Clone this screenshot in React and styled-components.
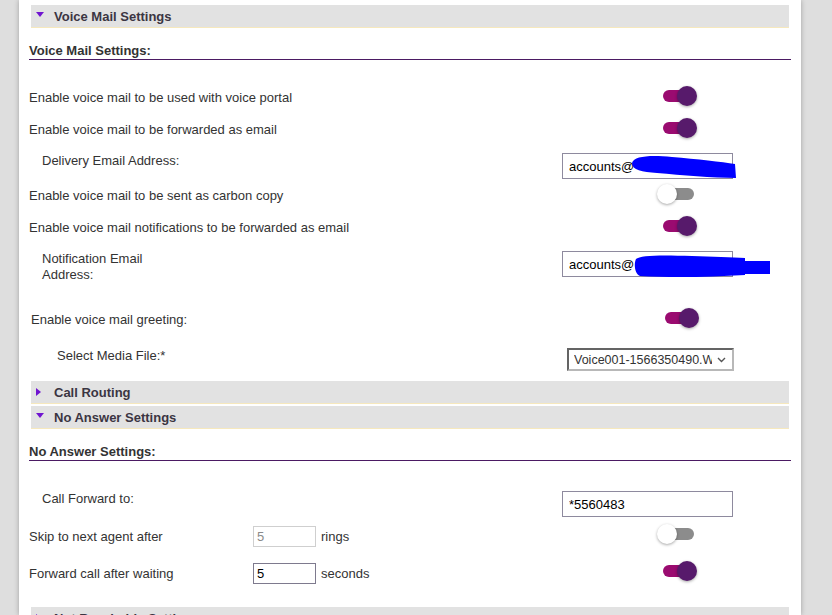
import React from 'react';
import styled, { createGlobalStyle } from 'styled-components';

const GlobalStyle = createGlobalStyle`
  html, body {
    margin: 0;
    padding: 0;
    background: #dedede;
    overflow: hidden;
  }
  body {
    font-family: "Liberation Sans", Arial, sans-serif;
    font-size: 13px;
    color: #333;
  }
`;

const Page = styled.div`
  display: flex;
  padding-left: 19px;
  height: 615px;
`;

const Panel = styled.div`
  width: 782px;
  background: #fff;
  box-shadow: 0 0 5px rgba(0, 0, 0, 0.28);
  padding: 5px 10px 0;
  box-sizing: border-box;
`;

const SectionHeader = styled.div`
  display: flex;
  align-items: center;
  height: 22px;
  margin: ${p => p.$mt || 0}px 2px ${p => p.$mb || 0}px;
  background: #e2e2e2;
  border-bottom: 1px solid #f6e8bd;
  font-weight: bold;
  font-size: 13px;
  color: #3b3542;
`;

const CaretBox = styled.span`
  width: 23px;
  display: flex;
  justify-content: ${p => (p.$open ? 'flex-start' : 'flex-start')};
  padding-left: 5px;
  box-sizing: border-box;
`;

const Caret = styled.span`
  width: 0;
  height: 0;
  ${p =>
    p.$open
      ? `
    border-left: 4.5px solid transparent;
    border-right: 4.5px solid transparent;
    border-top: 5px solid #7014d0;
    margin-bottom: 3px;
  `
      : `
    border-top: 4.5px solid transparent;
    border-bottom: 4.5px solid transparent;
    border-left: 5px solid #7014d0;
  `}
`;

const Heading = styled.div`
  margin: 15px 0 22px;
  font-weight: bold;
  font-size: 13px;
  line-height: 16px;
  color: #333;
  border-bottom: 1px solid #4b1a63;
`;

const Row = styled.div`
  display: grid;
  grid-template-columns: 533px 1fr;
  align-items: ${p => (p.$top !== undefined ? 'start' : 'center')};
  height: ${p => p.$h}px;
  padding-top: ${p => p.$top || 0}px;
  padding-left: ${p => p.$shift || 0}px;
  box-sizing: border-box;
`;

const Label = styled.div`
  padding-left: ${p => p.$indent || 0}px;
  line-height: 16px;
  width: ${p => (p.$w ? `${p.$w}px` : 'auto')};
  color: #333;
`;

const Control = styled.div`
  display: flex;
  align-items: center;
  padding-left: ${p => p.$offset || 0}px;
`;

const InlineGroup = styled.div`
  display: flex;
  align-items: center;
`;

const Switch = styled.span`
  position: relative;
  display: inline-block;
  width: 40px;
  height: 20px;
  margin-bottom: 5px;
`;

const Track = styled.span`
  position: absolute;
  left: 6px;
  top: 4px;
  width: 31px;
  height: 12px;
  border-radius: 6px;
  background: ${p => (p.$on ? '#9a0b70' : '#8c8c8c')};
`;

const Knob = styled.span`
  position: absolute;
  top: 0;
  left: ${p => (p.$on ? 20 : 0)}px;
  width: 20px;
  height: 20px;
  border-radius: 50%;
  background: ${p => (p.$on ? '#571a6b' : '#fff')};
  box-shadow: 0 1px 3px rgba(0, 0, 0, 0.35);
`;

const FieldWrap = styled.span`
  position: relative;
  display: inline-block;
`;

const TextInput = styled.input`
  width: 171px;
  height: 26px;
  box-sizing: border-box;
  border: 1px solid #8e8a9e;
  padding: 0 6px;
  font: 13px "Liberation Sans", Arial, sans-serif;
  color: #000;
  background: #fff;
  outline: none;
`;

const SmallInput = styled.input`
  width: 63px;
  height: 21px;
  box-sizing: border-box;
  border: 1px solid ${p => (p.disabled ? '#cfcfcf' : '#7e7a8e')};
  padding: 0 3px;
  font: 13px "Liberation Sans", Arial, sans-serif;
  color: ${p => (p.disabled ? '#8a8a8a' : '#000')};
  background: #fff;
`;

const Unit = styled.span`
  margin-left: 5px;
  color: #333;
`;

const Redaction = styled.svg`
  position: absolute;
  left: 0;
  top: 0;
  overflow: visible;
  pointer-events: none;
`;

const Select = styled.select`
  appearance: none;
  width: 167px;
  height: 23px;
  box-sizing: border-box;
  border: 2px inset #b8b8b8;
  padding: 0 20px 0 5px;
  font: 12.5px "Liberation Sans", Arial, sans-serif;
  color: #333;
  background: #fff;
`;

const Chevron = styled.svg`
  position: absolute;
  right: 8px;
  top: 9px;
  pointer-events: none;
`;

const Toggle = ({ on }) => (
  <Switch>
    <Track $on={on} />
    <Knob $on={on} />
  </Switch>
);

const Header = ({ open, children, mt, mb }) => (
  <SectionHeader $mt={mt} $mb={mb}>
    <CaretBox>
      <Caret $open={open} />
    </CaretBox>
    {children}
  </SectionHeader>
);

const ToggleRow = ({ label, on, h = 32, shift }) => (
  <Row $h={h} $shift={shift}>
    <Label>{label}</Label>
    <Control $offset={95}>
      <Toggle on={on} />
    </Control>
  </Row>
);

export default function App() {
  return (
    <>
      <GlobalStyle />
      <Page>
        <Panel>
          <Header open>Voice Mail Settings</Header>
          <Heading>Voice Mail Settings:</Heading>

          <ToggleRow label="Enable voice mail to be used with voice portal" on />
          <ToggleRow label="Enable voice mail to be forwarded as email" on />

          <Row $h={34} $top={7}>
            <Label $indent={13}>Delivery Email Address:</Label>
            <Control>
              <FieldWrap>
                <TextInput defaultValue="accounts@" />
                <Redaction width="174" height="26">
                  <path
                    d="M70,10 C72,3 88,2 110,4 C135,6 160,9 173,11 L174,25 C150,25 120,22 95,20 C80,19 70,17 70,10 Z"
                    fill="#0000ff"
                  />
                </Redaction>
              </FieldWrap>
            </Control>
          </Row>

          <ToggleRow label="Enable voice mail to be sent as carbon copy" on={false} />
          <ToggleRow label="Enable voice mail notifications to be forwarded as email" on />

          <Row $h={56} $top={7}>
            <Label $indent={13} $w={125}>Notification Email Address:</Label>
            <Control>
              <FieldWrap>
                <TextInput defaultValue="accounts@" />
                <Redaction width="208" height="27">
                  <path
                    d="M74,8 C78,4 100,4 130,5 C150,6 170,6 183,7 L183,10 L208,10 L208,23 L183,23 L183,24 C150,26 110,27 78,25 C72,22 72,12 74,8 Z"
                    fill="#0000ff"
                  />
                </Redaction>
              </FieldWrap>
            </Control>
          </Row>

          <ToggleRow label="Enable voice mail greeting:" on h={40} shift={2} />

          <Row $h={40} $top={8}>
            <Label $indent={28}>Select Media File:*</Label>
            <Control $offset={5}>
              <FieldWrap>
                <Select defaultValue="v1">
                  <option value="v1">Voice001-1566350490.WAV</option>
                </Select>
                <Chevron width="9" height="6" viewBox="0 0 9 6">
                  <path d="M1 1 L4.5 4.5 L8 1" fill="none" stroke="#555" strokeWidth="1.4" />
                </Chevron>
              </FieldWrap>
            </Control>
          </Row>

          <Header mt={1} mb={2}>Call Routing</Header>
          <Header open>No Answer Settings</Header>
          <Heading>No Answer Settings:</Heading>

          <Row $h={35} $top={8}>
            <Label $indent={13}>Call Forward to:</Label>
            <Control>
              <TextInput defaultValue="*5560483" />
            </Control>
          </Row>

          <Row $h={37}>
            <InlineGroup>
              <Label $w={224}>Skip to next agent after</Label>
              <SmallInput defaultValue="5" disabled />
              <Unit>rings</Unit>
            </InlineGroup>
            <Control $offset={95}>
              <Toggle on={false} />
            </Control>
          </Row>

          <Row $h={37}>
            <InlineGroup>
              <Label $w={224}>Forward call after waiting</Label>
              <SmallInput defaultValue="5" />
              <Unit>seconds</Unit>
            </InlineGroup>
            <Control $offset={95}>
              <Toggle on />
            </Control>
          </Row>

          <Header mt={15}>Not Reachable Settings</Header>
        </Panel>
      </Page>
    </>
  );
}
